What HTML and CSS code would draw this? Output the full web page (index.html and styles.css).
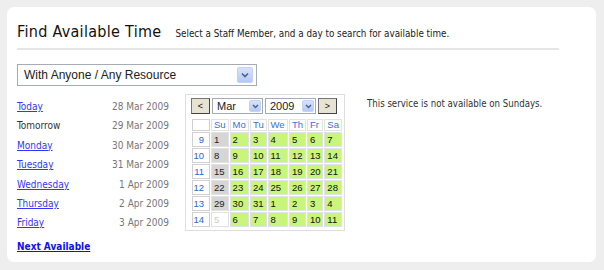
FILE: index.html
```html
<!DOCTYPE html>
<html lang="en">
<head>
  <meta charset="UTF-8" />
  <title>Find Available Time</title>
  <link rel="stylesheet" href="styles.css">
</head>
<body>
  <div class="panel">
    <div class="heading">
      <h1>Find Available Time</h1>
      <span class="hint">Select a Staff Member, and a day to search for available time.</span>
    </div>

    <div class="picker">
      <span class="picker-text">With Anyone / Any Resource</span>
      <span class="arrow"><svg width="8" height="6" viewBox="0 0 8 6"><path d="M1 1.5 L4 4.5 L7 1.5" fill="none" stroke="#4d6185" stroke-width="1.6"/></svg></span>
    </div>

    <div class="content">
      <div class="days">
        <div class="day"><a href="#">Today</a><span class="date">28 Mar 2009</span></div>
        <div class="day"><span class="current">Tomorrow</span><span class="date">29 Mar 2009</span></div>
        <div class="day"><a href="#">Monday</a><span class="date">30 Mar 2009</span></div>
        <div class="day"><a href="#">Tuesday</a><span class="date">31 Mar 2009</span></div>
        <div class="day"><a href="#">Wednesday</a><span class="date">1 Apr 2009</span></div>
        <div class="day"><a href="#">Thursday</a><span class="date">2 Apr 2009</span></div>
        <div class="day"><a href="#">Friday</a><span class="date">3 Apr 2009</span></div>
        <a class="next" href="#">Next Available</a>
      </div>

      <div class="calendar">
        <div class="cal-nav">
          <span class="cal-btn">&lt;</span>
          <span class="cal-select month">Mar<span class="arrow small"><svg width="7" height="5" viewBox="0 0 7 5"><path d="M1 1 L3.5 3.5 L6 1" fill="none" stroke="#4d6185" stroke-width="1.5"/></svg></span></span>
          <span class="cal-select year">2009<span class="arrow small"><svg width="7" height="5" viewBox="0 0 7 5"><path d="M1 1 L3.5 3.5 L6 1" fill="none" stroke="#4d6185" stroke-width="1.5"/></svg></span></span>
          <span class="cal-btn">&gt;</span>
        </div>
        <table class="cal-grid">
          <tr class="head">
            <th class="wk"></th><th>Su</th><th>Mo</th><th>Tu</th><th>We</th><th>Th</th><th>Fr</th><th>Sa</th>
          </tr>
          <tr><td class="wk">9</td><td class="off">1</td><td class="on">2</td><td class="on">3</td><td class="on">4</td><td class="on">5</td><td class="on">6</td><td class="on">7</td></tr>
          <tr><td class="wk">10</td><td class="off">8</td><td class="on">9</td><td class="on">10</td><td class="on">11</td><td class="on">12</td><td class="on">13</td><td class="on">14</td></tr>
          <tr><td class="wk">11</td><td class="off">15</td><td class="on">16</td><td class="on">17</td><td class="on">18</td><td class="on">19</td><td class="on">20</td><td class="on">21</td></tr>
          <tr><td class="wk">12</td><td class="off">22</td><td class="on">23</td><td class="on">24</td><td class="on">25</td><td class="on">26</td><td class="on">27</td><td class="on">28</td></tr>
          <tr><td class="wk">13</td><td class="off">29</td><td class="on">30</td><td class="on">31</td><td class="on">1</td><td class="on">2</td><td class="on">3</td><td class="on">4</td></tr>
          <tr><td class="wk">14</td><td class="empty">5</td><td class="on">6</td><td class="on">7</td><td class="on">8</td><td class="on">9</td><td class="on">10</td><td class="on">11</td></tr>
        </table>
      </div>

      <p class="notice">This service is not available on Sundays.</p>
    </div>
  </div>
</body>
</html>
```

FILE: styles.css
```css
* {
  box-sizing: border-box;
  margin: 0;
  padding: 0;
}

body {
  background-color: #eeeeee;
  padding: 7px 8px 8px 7px;
  font-family: Tahoma, "DejaVu Sans Condensed", "DejaVu Sans", sans-serif;
}

/* Panel */
.panel {
  background: #fff;
  border-radius: 7px;
  height: 255px;
  padding: 0 37px 0 10px;
}

.heading {
  display: flex;
  align-items: baseline;
  padding-top: 15px;
  padding-bottom: 7px;
  border-bottom: 2px solid #e6e6e6;
}

.heading h1 {
  font-size: 16px;
  font-weight: normal;
  color: #111;
  margin-right: 14px;
  letter-spacing: 0.3px;
}

.hint {
  font-size: 9.8px;
  color: #222;
}

/* Staff picker */
.picker {
  display: flex;
  align-items: center;
  justify-content: space-between;
  width: 240px;
  height: 22px;
  margin-top: 14px;
  border: 1px solid #a5acb5;
  padding: 0 3px 0 6px;
  font-family: "Liberation Sans", Arial, sans-serif;
  font-size: 12px;
  color: #222;
}

.arrow {
  display: flex;
  align-items: center;
  justify-content: center;
  width: 16px;
  height: 16px;
  background: linear-gradient(#d6e2fd, #b5c9f8);
  border: 1px solid #c3d2f5;
  border-radius: 2px;
}

.arrow.small {
  width: 12px;
  height: 12px;
}

/* Content */
.content {
  display: flex;
  align-items: flex-start;
  margin-top: 8px;
}

.days {
  width: 152px;
  font-size: 10px;
  padding-top: 3px;
}

.day {
  display: flex;
  justify-content: space-between;
  height: 19.4px;
  line-height: 19px;
}

.day a {
  color: #3535f5;
}

.current {
  color: #333;
}

.date {
  color: #777;
}

.next {
  display: block;
  margin-top: 8px;
  font-weight: bold;
  color: #1010f0;
}

/* Calendar */
.calendar {
  margin-left: 16px;
  width: 160px;
  height: 137px;
  border: 1px solid #dedede;
  padding: 3px 0 0 5px;
}

.cal-nav {
  display: flex;
  gap: 2px;
  height: 16px;
}

.cal-btn {
  width: 19px;
  background: #e6e3d3;
  border: 1px solid #444;
  border-top-color: #777;
  border-left-color: #777;
  font-family: "Liberation Sans", Arial, sans-serif;
  font-size: 9px;
  line-height: 14px;
  text-align: center;
  color: #111;
}

.cal-select {
  display: flex;
  align-items: center;
  justify-content: space-between;
  width: 51px;
  border: 1px solid #a5acb5;
  padding: 0 1px 0 4px;
  font-family: "Liberation Sans", Arial, sans-serif;
  font-size: 11px;
  color: #222;
}

.cal-grid {
  margin-top: 4px;
  border-collapse: separate;
  border-spacing: 1px;
  width: 152px;
  font-family: "Liberation Sans", Arial, sans-serif;
  font-size: 9.5px;
}

.cal-grid th,
.cal-grid td {
  border: 1px solid #e2e2e2;
  text-align: left;
  padding: 0 0 0 2px;
  height: 15px;
  line-height: 13px;
}

.cal-grid th {
  font-weight: normal;
  color: #3a6fd8;
  height: 12px;
  line-height: 10px;
}

.cal-grid .wk {
  text-align: right;
  padding: 0 5px 0 0;
  color: #2f64d0;
  border-color: #d0d0d0;
  width: 18px;
}

.cal-grid .off {
  background: #d6d6d6;
  color: #222;
}

.cal-grid .on {
  background: #c8f57a;
  color: #111;
}

.cal-grid .empty {
  color: #ccc;
}

.notice {
  margin-left: 22px;
  margin-top: 4px;
  font-size: 9.6px;
  color: #333;
}
```
